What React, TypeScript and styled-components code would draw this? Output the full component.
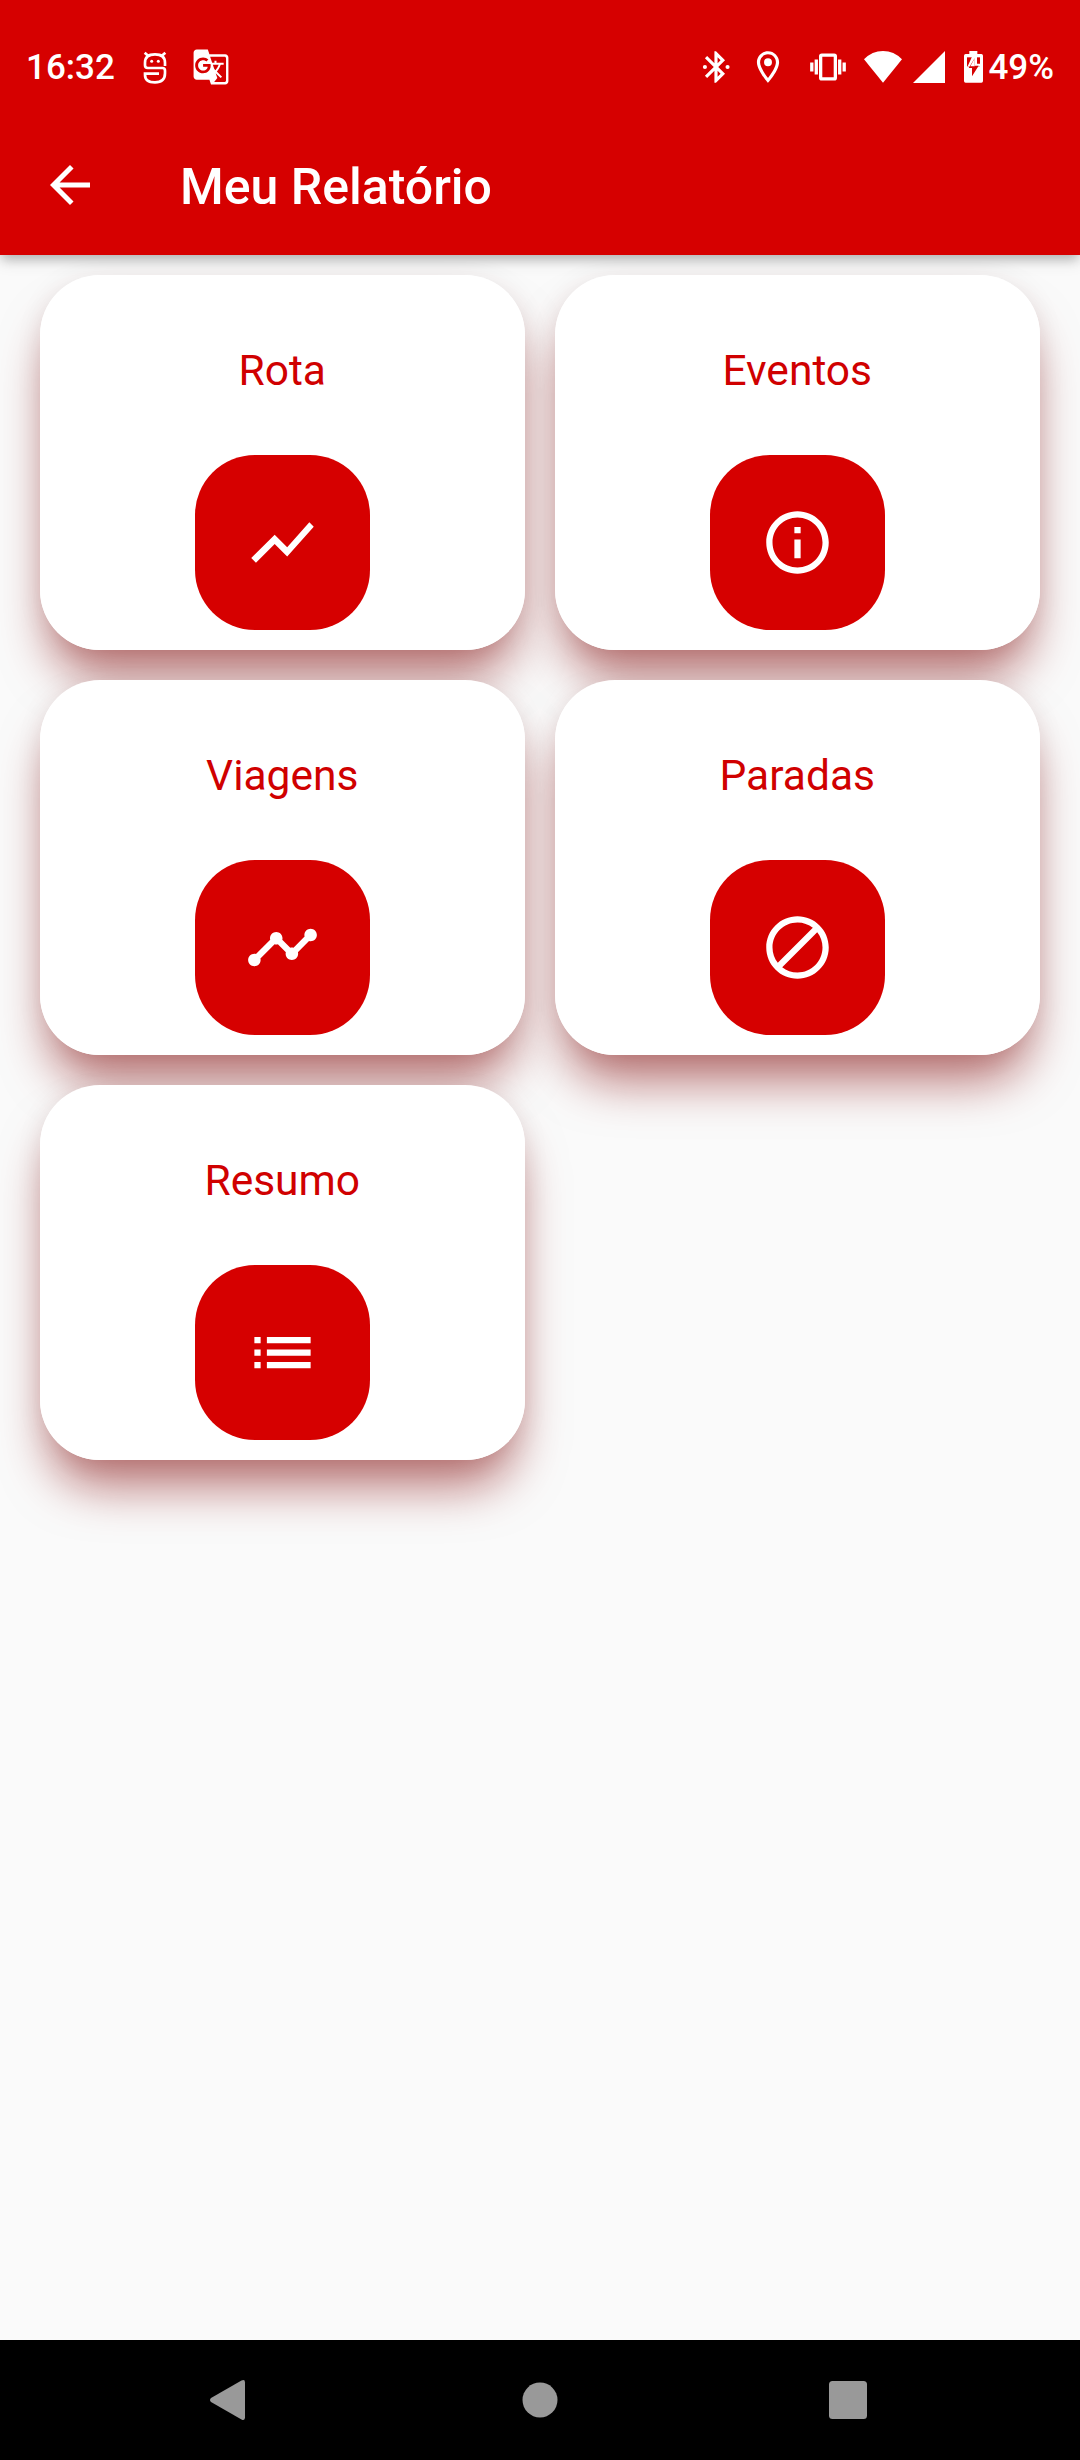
import React from 'react';
import styled, { createGlobalStyle } from 'styled-components';
import { MdGTranslate } from 'react-icons/md';

const red = '#d60000';

const GlobalStyle = createGlobalStyle`
  *, *::before { box-sizing: border-box; }
  body { margin: 0; background: #fafafa; }
`;

const Screen = styled.div`
  width: 1080px;
  height: 2460px;
  display: flex;
  flex-direction: column;
  overflow: hidden;
  background: #fafafa;
  font-family: Roboto, 'Noto Sans', sans-serif;
`;

const Header = styled.header`
  height: 255px;
  flex: none;
  background: ${red};
  color: #fff;
  box-shadow: 0 6px 10px -2px rgba(0, 0, 0, 0.2), 0 6px 16px rgba(0, 0, 0, 0.12);
`;

const StatusBar = styled.div`
  height: 120px;
  padding: 14px 26px 0 26px;
  display: flex;
  align-items: center;
  justify-content: space-between;
`;

const StatusGroup = styled.div`
  display: flex;
  align-items: center;
`;

const StatusText = styled.span<{ $gap?: number }>`
  font-size: 35px;
  line-height: 41px;
  font-weight: 500;
  padding-top: 1px;
  margin-left: ${(p) => p.$gap ?? 0}px;
`;

const Glyph = styled.span<{ $w: number; $h: number; $gap?: number }>`
  display: flex;
  width: ${(p) => p.$w}px;
  height: ${(p) => p.$h}px;
  margin-left: ${(p) => p.$gap ?? 0}px;
  svg {
    width: 100%;
    height: 100%;
    display: block;
  }
`;

const AppBar = styled.div`
  height: 135px;
  padding: 0 40px 5px;
  display: flex;
  align-items: center;
`;

const BackButton = styled.button`
  width: 60px;
  height: 60px;
  padding: 0;
  border: 0;
  background: none;
  color: inherit;
  svg { display: block; width: 60px; height: 60px; }
`;

const Title = styled.h1`
  margin: 4px 0 0 80px;
  font-size: 50px;
  line-height: 60px;
  font-weight: 500;
`;

const Grid = styled.main`
  flex: 1;
  display: grid;
  grid-template-columns: 485px 485px;
  grid-auto-rows: 375px;
  gap: 30px;
  padding: 20px 40px;
  isolation: isolate;
`;

const Card = styled.section`
  position: relative;
  display: flex;
  flex-direction: column;
  align-items: center;
  justify-content: space-between;
  padding: 71px 0 20px;
  border-radius: 60px;
  background: #fff;
  &::before {
    content: '';
    position: absolute;
    inset: 0;
    z-index: -1;
    border-radius: 60px;
    box-shadow: 0 35px 50px -11px rgba(130, 5, 5, 0.58), 0 2px 26px rgba(60, 0, 0, 0.08);
  }
`;

const CardLabel = styled.h2`
  margin: 0;
  padding-right: 0.5px;
  font-size: 42.5px;
  line-height: 50px;
  font-weight: 400;
  color: #d00000;
`;

const CardButton = styled.button`
  width: 175px;
  height: 175px;
  padding: 0;
  border: 0;
  border-radius: 60px;
  display: flex;
  align-items: center;
  justify-content: center;
  background: ${red};
  color: #fff;
  svg { width: 75px; height: 75px; }
`;

const NavBar = styled.nav`
  height: 120px;
  flex: none;
  padding: 0 210px;
  display: grid;
  grid-template-columns: 40px 1fr 40px;
  align-items: center;
  justify-items: center;
  background: #000;
`;

const NavIcon = styled.svg`
  display: block;
  width: 40px;
  height: 40px;
  fill: #999;
  overflow: visible;
`;

const Path = ({ d }: { d: string }) => (
  <svg viewBox="0 0 24 24" fill="currentColor">
    <path d={d} />
  </svg>
);

const cards = [
  { label: 'Rota', d: 'M3.5 18.49l6-6.01 4 4L22 6.92l-1.41-1.41-7.09 7.97-4-4L2 16.99z' },
  {
    label: 'Eventos',
    d: 'M11 7h2v2h-2zm0 4h2v6h-2zm1-9C6.48 2 2 6.48 2 12s4.48 10 10 10 10-4.48 10-10S17.52 2 12 2zm0 18c-4.41 0-8-3.59-8-8s3.59-8 8-8 8 3.59 8 8-3.59 8-8 8z',
  },
  {
    label: 'Viagens',
    d: 'M23 8c0 1.1-.9 2-2 2-.18 0-.35-.02-.51-.07l-3.56 3.55c.05.16.07.34.07.52 0 1.1-.9 2-2 2s-2-.9-2-2c0-.18.02-.36.07-.52l-2.55-2.55c-.16.05-.34.07-.52.07s-.36-.02-.52-.07l-4.55 4.56c.05.16.07.33.07.51 0 1.1-.9 2-2 2s-2-.9-2-2 .9-2 2-2c.18 0 .35.02.51.07l4.56-4.55C8.02 9.36 8 9.18 8 9c0-1.1.9-2 2-2s2 .9 2 2c0 .18-.02.36-.07.52l2.55 2.55c.16-.05.34-.07.52-.07s.36.02.52.07l3.55-3.56C19.02 8.35 19 8.18 19 8c0-1.1.9-2 2-2s2 .9 2 2z',
  },
  {
    label: 'Paradas',
    d: 'M12 2C6.48 2 2 6.48 2 12s4.48 10 10 10 10-4.48 10-10S17.52 2 12 2zM4 12c0-4.42 3.58-8 8-8 1.85 0 3.55.63 4.9 1.69L5.69 16.9C4.63 15.55 4 13.85 4 12zm8 8c-1.85 0-3.55-.63-4.9-1.69L18.31 7.1C19.37 8.45 20 10.15 20 12c0 4.42-3.58 8-8 8z',
  },
  {
    label: 'Resumo',
    d: 'M3 13h2v-2H3v2zm0 4h2v-2H3v2zm0-8h2V7H3v2zm4 4h14v-2H7v2zm0 4h14v-2H7v2zM7 7v2h14V7H7z',
  },
];

export default function App() {
  return (
    <Screen>
      <GlobalStyle />
      <Header>
        <StatusBar>
          <StatusGroup>
            <StatusText>16:32</StatusText>
            <Glyph $w={26} $h={35} $gap={27}>
              <svg viewBox="427 56 78 105" fill="none" stroke="#fff" strokeWidth="8">
                <path d="M435 64 L447 75 M497 64 L485 75" />
                <path d="M496 104 V94 Q496 69 466 69 Q436 69 436 94 V102 Q436 110 444 110 H488 Q496 110 496 118 V126 Q496 153 466 153 Q436 153 436 130 V127 H478" />
                <circle cx="456" cy="90" r="4.5" fill="#fff" stroke="none" />
                <circle cx="476" cy="90" r="4.5" fill="#fff" stroke="none" />
              </svg>
            </Glyph>
            <Glyph $w={38} $h={38} $gap={24}>
              <MdGTranslate />
            </Glyph>
          </StatusGroup>
          <StatusGroup>
            <Glyph $w={38} $h={38}>
              <svg viewBox="0 0 24 24" fill="#fff">
                <path d="M17.71 7.71L12 2h-1v7.59L6.41 5 5 6.41 10.59 12 5 17.59 6.41 19 11 14.41V22h1l5.71-5.71-4.3-4.29 4.3-4.29zM13 5.83l1.88 1.88L13 9.59V5.83zm1.88 10.46L13 18.17v-3.76l1.88 1.88z" />
                <circle cx="5" cy="12" r="1.3" />
                <circle cx="19.3" cy="12" r="1.3" />
              </svg>
            </Glyph>
            <Glyph $w={38} $h={38} $gap={14}>
              <Path d="M12 2C8.13 2 5 5.13 5 9c0 5.25 7 13 7 13s7-7.75 7-13c0-3.87-3.13-7-7-7zM7 9c0-2.76 2.24-5 5-5s5 2.24 5 5c0 2.88-2.88 7.19-5 9.88C9.92 16.21 7 11.85 7 9zm2.500 0a2.500 2.500 0 1 0 5 0a2.500 2.500 0 1 0-5 0z" />
            </Glyph>
            <Glyph $w={36} $h={36} $gap={23}>
              <svg viewBox="0 0 24 24" fill="none" stroke="#fff" strokeWidth="2.2">
                <path d="M1.200 9v6M4.200 7v10M22.800 9v6M19.800 7v10" />
                <rect x="7.100" y="4.100" width="9.800" height="15.800" rx="0.8" />
              </svg>
            </Glyph>
            <Glyph $w={38} $h={32} $gap={18}>
              <svg viewBox="582 60 114 96" fill="#fff">
                <path d="M582 85 Q606 60 639 60 Q672 60 696 85 L639 155Z" />
              </svg>
            </Glyph>
            <Glyph $w={32} $h={32} $gap={11}>
              <svg viewBox="0 0 32 32" fill="#fff">
                <path d="M0 32H32V0z" />
              </svg>
            </Glyph>
            <Glyph $w={19} $h={32} $gap={19}>
              <svg viewBox="882 62 57 96">
                <path
                  fill="#fff"
                  d="M898 62H922V71H934Q939 71 939 76V152Q939 157 934 157H887Q882 157 882 152V76Q882 71 887 71H898Z"
                />
                <path fill={red} d="M891 81H930V108H891Z" />
                <path fill="#fff" d="M906 79H921V100H930V108H893Z" />
                <path fill={red} d="M914 84V106H926L906 138V113H896Z" />
                <path fill="#fff" d="M910 91L914 84V108H901Z" />
              </svg>
            </Glyph>
            <StatusText $gap={5}>49%</StatusText>
          </StatusGroup>
        </StatusBar>
        <AppBar>
          <BackButton aria-label="Voltar">
            <Path d="M20 11H7.83l5.59-5.59L12 4l-8 8 8 8 1.41-1.41L7.83 13H20v-2z" />
          </BackButton>
          <Title>Meu Relatório</Title>
        </AppBar>
      </Header>
      <Grid>
        {cards.map((card) => (
          <Card key={card.label}>
            <CardLabel>{card.label}</CardLabel>
            <CardButton aria-label={card.label}>
              <Path d={card.d} />
            </CardButton>
          </Card>
        ))}
      </Grid>
      <NavBar>
        <NavIcon viewBox="0 0 40 40">
          <path d="M31.5 .6Q35 -1 35 2.5V37.500Q35 41 31.500 39.400L1 22Q-1 20 1 18Z" />
        </NavIcon>
        <NavIcon viewBox="0 0 40 40">
          <circle cx="20" cy="20" r="17.500" />
        </NavIcon>
        <NavIcon viewBox="0 0 40 40">
          <rect x="-1" y="1" width="38" height="38" rx="3.500" />
        </NavIcon>
      </NavBar>
    </Screen>
  );
}
